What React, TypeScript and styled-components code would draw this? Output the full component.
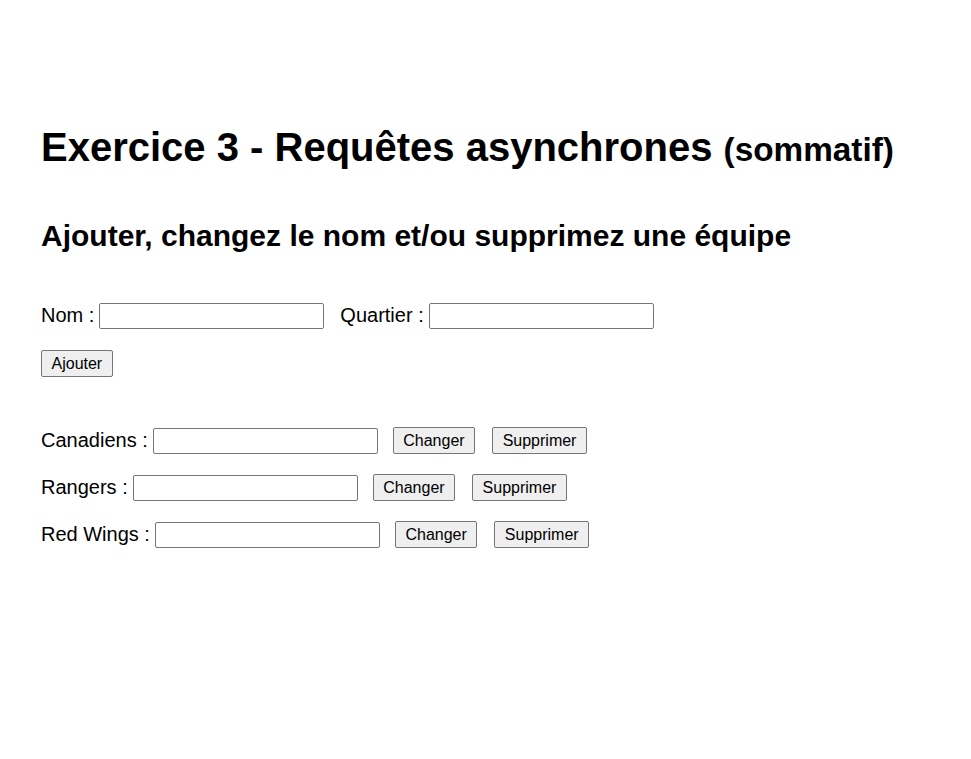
import React from "react";
import styled, { createGlobalStyle } from "styled-components";

const GlobalStyle = createGlobalStyle`
  html, body {
    margin: 0;
    padding: 0;
    background: #ffffff;
  }
  body {
    font-family: "Liberation Sans", Arial, sans-serif;
    font-size: 20px;
    color: #000000;
  }
`;

const Page = styled.main`
  display: flex;
  flex-direction: column;
  align-items: flex-start;
  padding: 124px 41px 0 41px;
`;

const Title = styled.h1`
  margin: 0;
  font-size: 40px;
  line-height: 46px;
  font-weight: bold;
  white-space: nowrap;
`;

const Small = styled.small`
  font-size: 33.33px;
`;

const Subtitle = styled.h2`
  margin: 46px 0 0 0;
  font-size: 30px;
  line-height: 34px;
  font-weight: bold;
  white-space: nowrap;
`;

const Row = styled.div<{ $top: number }>`
  display: flex;
  align-items: center;
  margin-top: ${(p) => p.$top}px;
  height: 27px;
`;

const Label = styled.label<{ $lead?: number }>`
  font-size: 20px;
  line-height: 23px;
  margin-left: ${(p) => p.$lead ?? 0}px;
  white-space: pre;
`;

const TextInput = styled.input`
  box-sizing: border-box;
  width: 225px;
  height: 26px;
  margin: 0 0 0 5px;
  padding: 1px 2px;
  border: 1px solid #767676;
  border-radius: 2px;
  background: #ffffff;
  font-family: "Liberation Sans", Arial, sans-serif;
  font-size: 16px;
`;

const Button = styled.button<{ $lead?: number }>`
  box-sizing: border-box;
  height: 27px;
  margin: 0 0 0 ${(p) => p.$lead ?? 0}px;
  padding: 0 9.5px;
  border: 1px solid #767676;
  border-radius: 2px;
  background: #efefef;
  color: #000000;
  font-family: "Liberation Sans", Arial, sans-serif;
  font-size: 16px;
  line-height: 18px;
`;

const teams = ["Canadiens", "Rangers", "Red Wings"];

export default function App() {
  return (
    <>
      <GlobalStyle />
      <Page>
        <Title>
          Exercice 3 - Requêtes asynchrones <Small>(sommatif)</Small>
        </Title>
        <Subtitle>Ajouter, changez le nom et/ou supprimez une équipe</Subtitle>
        <Row $top={49}>
          <Label>Nom :</Label>
          <TextInput type="text" />
          <Label $lead={16}>Quartier :</Label>
          <TextInput type="text" />
        </Row>
        <Row $top={21}>
          <Button>Ajouter</Button>
        </Row>
        {teams.map((t, i) => (
          <Row key={t} $top={i === 0 ? 50 : 20}>
            <Label>{t} :</Label>
            <TextInput type="text" />
            <Button $lead={15}>Changer</Button>
            <Button $lead={17}>Supprimer</Button>
          </Row>
        ))}
      </Page>
    </>
  );
}
